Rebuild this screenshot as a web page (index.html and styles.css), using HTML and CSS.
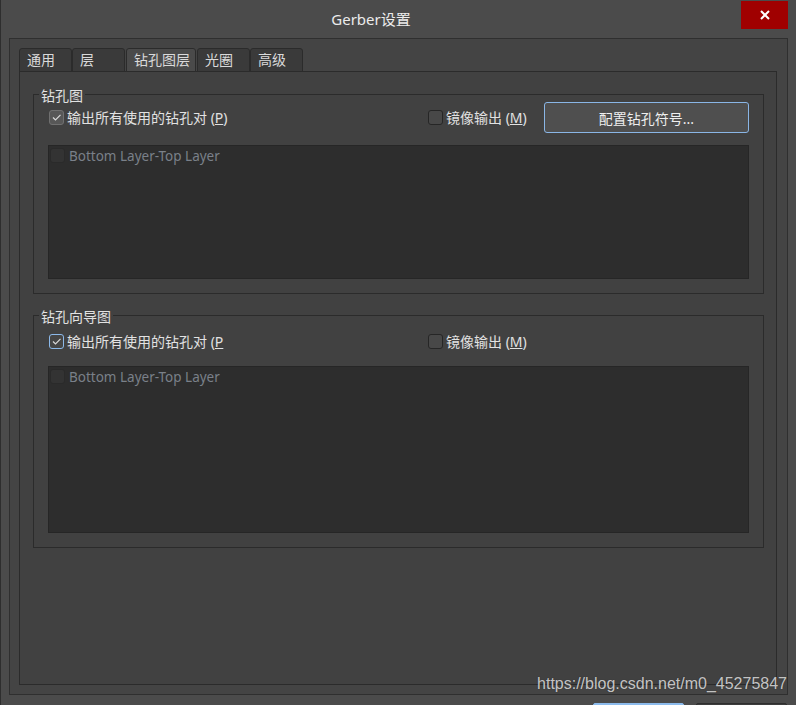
FILE: index.html
```html
<!DOCTYPE html>
<html lang="zh-CN">
<head>
<meta charset="utf-8">
<title>Gerber设置</title>
<link rel="stylesheet" href="styles.css">
</head>
<body>
<div class="window">
  <div class="titlebar">
    <div class="title">Gerber设置</div>
    <div class="close">
      <svg width="10" height="10" viewBox="0 0 10 10"><path d="M1 1 L9 9 M9 1 L1 9" stroke="#ffffff" stroke-width="2" fill="none"/></svg>
    </div>
  </div>
  <div class="frame">
    <div class="tabs">
      <div class="tab">通用</div>
      <div class="tab">层</div>
      <div class="tab active">钻孔图层</div>
      <div class="tab">光圈</div>
      <div class="tab">高级</div>
    </div>
    <div class="panel">
      <div class="group">
        <span class="legend">钻孔图</span>
        <div class="row">
          <label class="check first"><span class="box checked"><svg width="11" height="11" viewBox="0 0 11 11"><path d="M2 5.5 L4.5 8 L9.5 2.8" fill="none" stroke="#d8d8d8" stroke-width="1.2"/></svg></span><span>输出所有使用的钻孔对 (<u>P</u>)</span></label>
          <label class="check mirror"><span class="box"></span><span>镜像输出 (<u>M</u>)</span></label>
          <button class="btn">配置钻孔符号...</button>
        </div>
        <div class="list l1">
          <div class="item"><span class="box disabled"></span><span>Bottom Layer-Top Layer</span></div>
        </div>
      </div>
      <div class="group">
        <span class="legend">钻孔向导图</span>
        <div class="row low">
          <label class="check first"><span class="box checked focus"><svg width="11" height="11" viewBox="0 0 11 11"><path d="M2 5.5 L4.5 8 L9.5 2.8" fill="none" stroke="#d8d8d8" stroke-width="1.2"/></svg></span><span>输出所有使用的钻孔对 (<u>P</u></span></label>
          <label class="check mirror"><span class="box"></span><span>镜像输出 (<u>M</u>)</span></label>
        </div>
        <div class="list l2">
          <div class="item"><span class="box disabled"></span><span>Bottom Layer-Top Layer</span></div>
        </div>
      </div>
    </div>
  </div>
  <div class="footer">
    <div class="fbtn primary"></div>
    <div class="fbtn"></div>
  </div>
  <div class="watermark">https://blog.csdn.net/m0_45275847</div>
</div>
</body>
</html>
```

FILE: styles.css
```css
* { box-sizing: border-box; }

body {
  margin: 0;
  background: #4b4b4b;
  font-family: "Noto Sans", "Noto Sans CJK SC", sans-serif;
  color: #e0e0e0;
}

.window {
  position: relative;
  width: 796px;
  height: 705px;
  overflow: hidden;
  background: #4b4b4b;
  border-left: 1px solid #2e2e2e;
  display: flex;
  flex-direction: column;
}

.titlebar {
  flex: none;
  height: 38px;
  display: flex;
  align-items: flex-start;
}

.title {
  flex: 1;
  text-align: center;
  font-size: 15px;
  line-height: 38px;
  color: #ececec;
}

.close {
  width: 47px;
  height: 28px;
  margin-top: 1px;
  margin-right: 8px;
  background: #a00000;
  display: flex;
  align-items: center;
  justify-content: center;
}

.frame {
  flex: none;
  width: 779px;
  height: 657px;
  margin-left: 8px;
  border: 1px solid #2f2f2f;
  background: #444444;
  padding: 9px 10px 9px 9px;
  display: flex;
  flex-direction: column;
}

.tabs {
  flex: none;
  display: flex;
  height: 23px;
  position: relative;
  z-index: 1;
}

.tab {
  width: 53px;
  height: 24px;
  border: 1px solid #2b2b2b;
  border-radius: 3px 3px 0 0;
  background: #3a3a3a;
  padding-left: 7px;
  font-size: 14px;
  line-height: 22px;
  color: #dadada;
  white-space: nowrap;
}

.tab.active {
  width: 70px;
  margin: 0 1px;
  background: #4a4a4a;
}

.panel {
  flex: 1;
  border: 1px solid #2b2b2b;
  background: #414141;
  padding: 22px 12px 0 13px;
}

.group {
  position: relative;
  border: 1px solid #2b2b2b;
  padding: 7px 14px 14px;
}

.group + .group {
  margin-top: 21px;
}

.legend {
  position: absolute;
  top: -7px;
  left: 5px;
  padding: 0 2px;
  background: #414141;
  font-size: 14px;
  line-height: 16px;
  color: #e2e2e2;
}

.row {
  display: flex;
  align-items: center;
  height: 31px;
  padding-left: 1px;
}

.row.low {
  padding-top: 6px;
}

.check {
  flex: none;
  display: flex;
  align-items: center;
  gap: 3px;
  font-size: 14px;
  line-height: 18px;
  color: #e2e2e2;
  white-space: nowrap;
}

.check.first { width: 379px; }
.check.mirror { width: 116px; }

.box {
  flex: none;
  width: 15px;
  height: 15px;
  border: 1px solid #262626;
  border-radius: 3px;
  background: #484848;
  display: flex;
  align-items: center;
  justify-content: center;
}

.box.checked {
  background: #575757;
  border-color: #707070;
}

.box.focus {
  background: #454545;
  border-color: #8cb9ea;
}

.box.disabled {
  background: #333333;
  border-color: #2a2a2a;
}

.btn {
  flex: none;
  width: 205px;
  height: 31px;
  padding: 0;
  border: 1px solid #8ab6e6;
  border-radius: 3px;
  background: #4f4f4f;
  color: #eeeeee;
  font-family: "Noto Sans", "Noto Sans CJK SC", sans-serif;
  font-size: 14px;
}

.list {
  margin-top: 12px;
  border: 1px solid #262626;
  background: #2d2d2d;
  padding: 2px 1px;
}

.l1 { height: 134px; }
.l2 { height: 167px; }

.item {
  display: flex;
  align-items: center;
  gap: 4px;
  height: 15px;
  font-size: 13.5px;
  line-height: 18px;
  color: #7a8089;
  white-space: nowrap;
}

.footer {
  flex: none;
  display: flex;
  justify-content: flex-end;
  gap: 12px;
  margin-top: 8px;
  padding-right: 9px;
}

.fbtn {
  width: 91px;
  height: 26px;
  border: 1px solid #2e2e2e;
  border-radius: 2px;
  background: #3c3c3c;
}

.fbtn.primary {
  background: #8cbbec;
  border-color: #8cbbec;
}

.watermark {
  position: absolute;
  top: 675px;
  right: 9px;
  font-family: "Liberation Sans", Arial, sans-serif;
  font-size: 16px;
  line-height: 18px;
  color: rgba(215, 215, 215, 0.9);
  text-shadow: 0 0 1px rgba(40, 40, 40, 0.6);
  white-space: nowrap;
}
```
